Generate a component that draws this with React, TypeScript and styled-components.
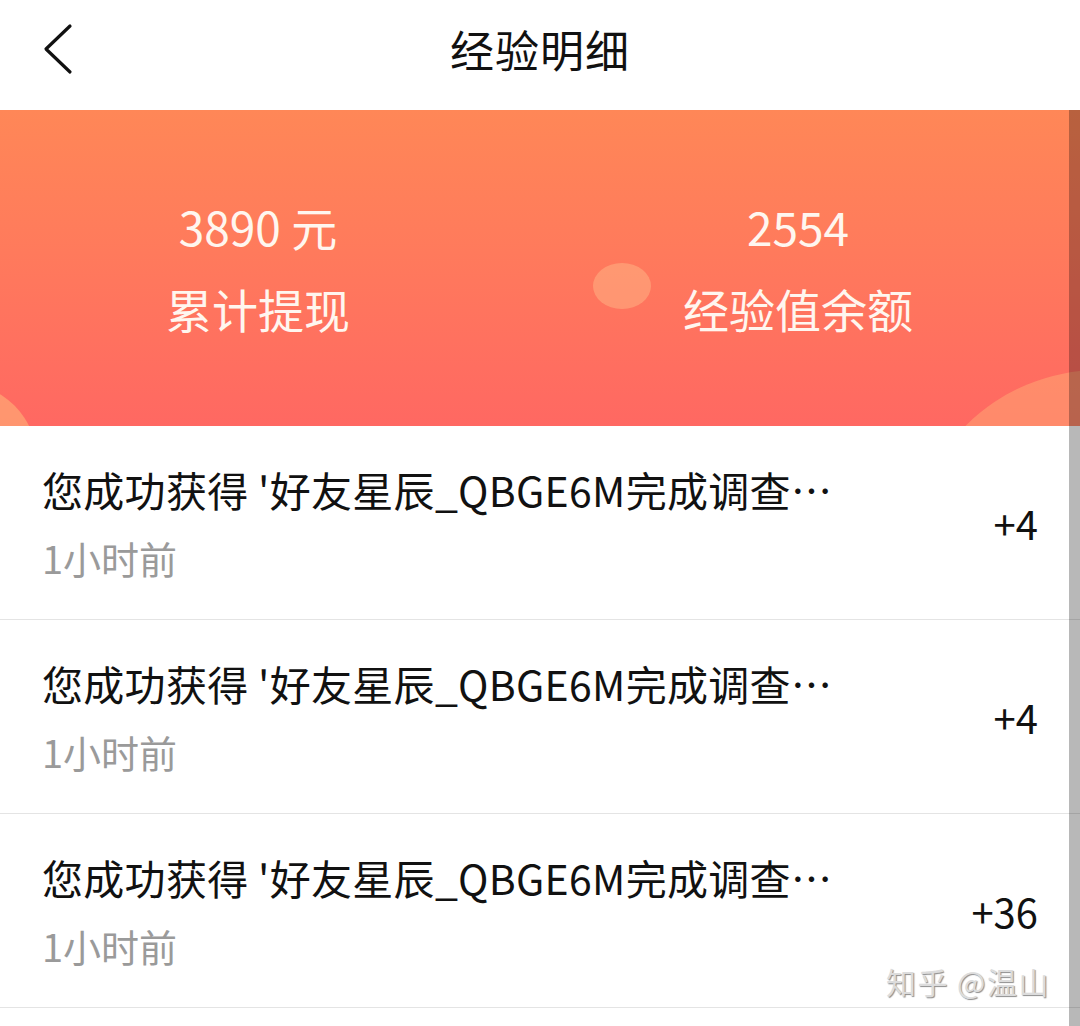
import React from "react";
import styled, { createGlobalStyle } from "styled-components";

const Global = createGlobalStyle`
  html, body { margin: 0; padding: 0; background: #fff; }
  body { font-family: "Noto Sans CJK SC", "Noto Sans", sans-serif; overflow: hidden; }
`;

const Page = styled.div`
  position: relative;
  width: 1080px;
  height: 1026px;
  overflow: hidden;
  background: #fff;
`;

const Header = styled.header`
  position: relative;
  height: 110px;
  display: flex;
  align-items: flex-start;
  justify-content: center;
  background: #fff;
`;

const BackButton = styled.button`
  position: absolute;
  left: 36px;
  top: 18px;
  width: 48px;
  height: 64px;
  padding: 0;
  border: 0;
  background: transparent;
  display: flex;
  align-items: center;
  justify-content: center;
`;

const Title = styled.h1`
  margin: 0;
  font-size: 44px;
  font-weight: 400;
  line-height: 98px;
  color: #111;
  letter-spacing: 1px;
`;

const Banner = styled.section`
  position: relative;
  height: 316px;
  overflow: hidden;
  background: linear-gradient(180deg, #ff8757 0%, #ff7a5c 45%, #ff6862 100%);
  display: grid;
  grid-template-columns: 516px 1fr;
  padding-top: 86px;
  box-sizing: border-box;
`;

const Bubble = styled.div<{ $w: number; $h: number; $x: number; $y: number; $c: string }>`
  position: absolute;
  left: ${(p) => p.$x}px;
  top: ${(p) => p.$y}px;
  width: ${(p) => p.$w}px;
  height: ${(p) => p.$h}px;
  border-radius: 50%;
  background: ${(p) => p.$c};
`;

const Stat = styled.div`
  position: relative;
  display: flex;
  flex-direction: column;
  align-items: center;
  gap: 22px;
  color: #fff6ef;
`;

const StatValue = styled.div`
  font-size: 46px;
  line-height: 60px;
  font-weight: 400;
`;

const StatLabel = styled.div`
  font-size: 46px;
  line-height: 60px;
  font-weight: 400;
`;

const List = styled.ul`
  list-style: none;
  margin: 0;
  padding: 0;
`;

const Row = styled.li`
  display: flex;
  align-items: center;
  justify-content: space-between;
  height: 193px;
  border-bottom: 1px solid #e4e4e4;
  padding: 0 42px;
`;

const RowText = styled.div`
  display: flex;
  flex-direction: column;
  gap: 17px;
  padding-top: 2px;
`;

const RowTitle = styled.div`
  font-size: 41px;
  line-height: 52px;
  letter-spacing: 0.3px;
  color: #111;
  white-space: nowrap;
`;

const RowTime = styled.div`
  font-size: 38px;
  line-height: 52px;
  color: #9a9a9a;
`;

const RowValue = styled.div`
  font-size: 40px;
  line-height: 52px;
  color: #111;
`;

const Scrollbar = styled.div`
  position: absolute;
  right: 0;
  top: 110px;
  bottom: 0;
  width: 11px;
  background: rgba(0, 0, 0, 0.28);
`;

const Watermark = styled.div`
  position: absolute;
  right: 30px;
  top: 961px;
  font-size: 30px;
  line-height: 40px;
  color: #dcdcdc;
  text-shadow: 1px 1px 1px rgba(0, 0, 0, 0.45);
  letter-spacing: 1.5px;
`;

const rows = [
  { title: "您成功获得 '好友星辰_QBGE6M完成调查…", time: "1小时前", value: "+4" },
  { title: "您成功获得 '好友星辰_QBGE6M完成调查…", time: "1小时前", value: "+4" },
  { title: "您成功获得 '好友星辰_QBGE6M完成调查…", time: "1小时前", value: "+36" },
];

export default function App() {
  return (
    <Page>
      <Global />
      <Header>
        <BackButton aria-label="back">
          <svg width="48" height="64" viewBox="0 0 48 64">
            <path d="M34 8 L10 31 L34 54" fill="none" stroke="#111" strokeWidth="3.2" strokeLinecap="round" strokeLinejoin="round" />
          </svg>
        </BackButton>
        <Title>经验明细</Title>
      </Header>
      <Banner>
        <Bubble $x={593} $y={153} $w={58} $h={46} $c="rgba(255,190,140,0.45)" />
        <Bubble $x={-117} $y={273} $w={154} $h={154} $c="rgba(255,180,120,0.6)" />
        <Bubble $x={910} $y={260} $w={380} $h={380} $c="rgba(255,180,120,0.45)" />
        <Stat>
          <StatValue>3890 元</StatValue>
          <StatLabel>累计提现</StatLabel>
        </Stat>
        <Stat>
          <StatValue>2554</StatValue>
          <StatLabel>经验值余额</StatLabel>
        </Stat>
      </Banner>
      <List>
        {rows.map((r, i) => (
          <Row key={i}>
            <RowText>
              <RowTitle>{r.title}</RowTitle>
              <RowTime>{r.time}</RowTime>
            </RowText>
            <RowValue>{r.value}</RowValue>
          </Row>
        ))}
      </List>
      <Watermark>知乎 @温山</Watermark>
      <Scrollbar />
    </Page>
  );
}
